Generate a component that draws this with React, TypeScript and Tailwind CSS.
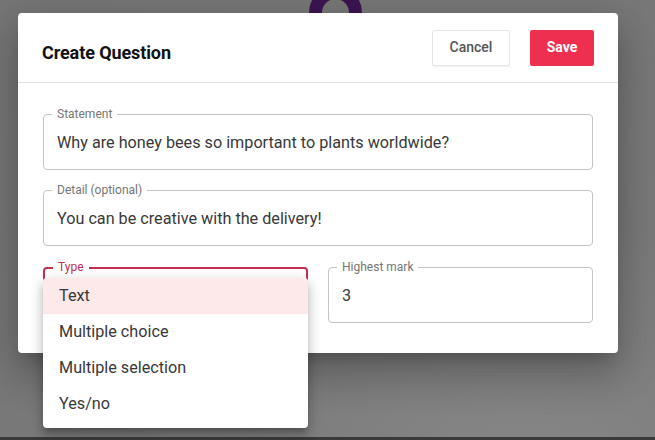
import React from 'react';

// outlined text field with a notched label
const Field: React.FC<{ label: string; value: string; focused?: boolean }> = ({ label, value, focused }) => {
  return (
    <div
      className={
        'relative h-[56px] rounded-[4px] flex items-center pt-[3px] ' +
        (focused ? 'border-2 border-[#c2304f] pl-[13px]' : 'border border-[#c4c4c4] pl-[13px]')
      }
    >
      <span
        className={
          'absolute px-[5px] bg-white text-[12px] leading-[16px] ' +
          (focused ? 'text-[#c2304f] -top-[10px] left-[8px]' : 'text-[#757575] -top-[9px] left-[8px]')
        }
      >
        {label}
      </span>
      <span className="text-[16.2px] text-[#383838]">{value}</span>
    </div>
  );
};

const options = ['Text', 'Multiple choice', 'Multiple selection', 'Yes/no'];

const App: React.FC = () => {
  return (
    <div
      className="relative h-[440px] w-[655px] overflow-hidden flex flex-col bg-[radial-gradient(ellipse_at_80%_130%,#8a8a8a_0%,#7a7a7a_45%,#767676_100%)]"
      style={{ fontFamily: 'Roboto, "Liberation Sans", sans-serif' }}
    >
      {/* purple ring peeking behind the dialog */}
      <div className="absolute left-[309px] -top-[14px] w-[53px] h-[53px] rounded-full border-[13px] border-[#3d1550]" />

      <div className="flex-1 pt-[13px] pl-[18px] relative">
        <div className="w-[600px] bg-white rounded-[4px] shadow-[0_11px_15px_-7px_rgba(0,0,0,0.2),0_24px_38px_3px_rgba(0,0,0,0.14),0_9px_46px_8px_rgba(0,0,0,0.12)]">
          <div className="h-[70px] px-6 flex items-center justify-between border-b border-[#e0e0e0]">
            <h1 className="text-[18px] font-bold text-[#111111] mt-[9px] tracking-[-0.1px]">Create Question</h1>
            <div className="flex items-center gap-[20px]">
              <button className="h-[36px] w-[78px] border border-[#e6e6e6] rounded-[2px] text-[14px] font-medium text-[#555555] bg-white shadow-[0_1px_1px_rgba(0,0,0,0.06)]">
                Cancel
              </button>
              <button className="h-[36px] w-[64px] rounded-[2px] text-[14px] font-bold text-white bg-[#ef2f50]">
                Save
              </button>
            </div>
          </div>

          <div className="px-[25px] pt-[31px] pb-[30px] flex flex-col gap-[20px]">
            <Field label="Statement" value="Why are honey bees so important to plants worldwide?" />
            <Field label="Detail (optional)" value="You can be creative with the delivery!" />
            <div className="grid grid-cols-2 gap-[20px] mt-[1px]">
              <Field label="Type" value="Text" focused />
              <Field label="Highest mark" value="3" />
            </div>
          </div>
        </div>

        {/* select dropdown */}
        <div className="absolute left-[43px] top-[278px] w-[265px] bg-white rounded-[4px] pb-[6px] shadow-[0_5px_5px_-3px_rgba(0,0,0,0.2),0_8px_10px_1px_rgba(0,0,0,0.14),0_3px_14px_2px_rgba(0,0,0,0.12)]">
          {options.map((opt, i) => (
            <div
              key={opt}
              className={
                'h-[36px] flex items-center pl-[16px] text-[16.2px] text-[#383838] ' +
                (i === 0 ? 'bg-[#fde8ea] rounded-t-[4px]' : '')
              }
            >
              {opt}
            </div>
          ))}
        </div>
      </div>

      <div className="h-[3px] bg-[#3a3a3a]" />
    </div>
  );
};

export default App;
